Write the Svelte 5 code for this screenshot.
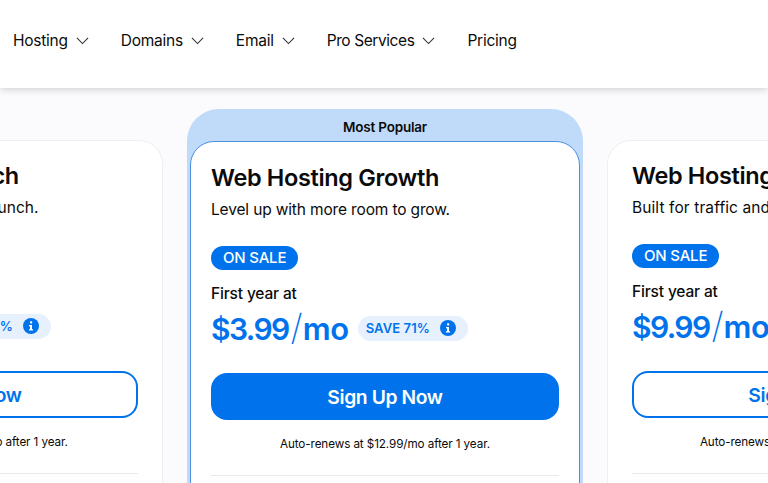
<script>
  const nav = [
    { label: 'Hosting', menu: true },
    { label: 'Domains', menu: true },
    { label: 'Email', menu: true },
    { label: 'Pro Services', menu: true },
    { label: 'Pricing', menu: false }
  ];
</script>

{#snippet info()}
  <svg class="info" viewBox="0 0 16 16" aria-hidden="true">
    <circle cx="8" cy="8" r="8" fill="#0073ec" />
    <rect x="7" y="3.2" width="2.2" height="2.2" rx="0.6" fill="#fff" />
    <path d="M6 7h3v4.2h1.1v1.3H5.9v-1.3H7V8.3H6z" fill="#fff" />
  </svg>
{/snippet}

{#snippet plan(title, sub, price, save, renew, solid)}
  <h2>{title}</h2>
  <p class="sub">{sub}</p>
  <span class="sale">ON SALE</span>
  <p class="first">First year at</p>
  <div class="price-row">
    <span class="price">{price}<span class="slash">/</span><span class="unit">mo</span></span>
    {#if save}
      <span class="save">{save}{@render info()}</span>
    {/if}
  </div>
  <button class:solid>Sign Up Now</button>
  <p class="renew">{renew}</p>
  <hr />
{/snippet}

<header>
  <nav>
    {#each nav as item}
      <span class="nav-item">
        {item.label}
        {#if item.menu}
          <svg class="chev" viewBox="0 0 14 8" aria-hidden="true">
            <path d="M1 1l6 6 6-6" fill="none" stroke="#333" stroke-width="1.2" />
          </svg>
        {/if}
      </span>
    {/each}
  </nav>
</header>

<main>
  <article class="card side">
    {@render plan('Web Hosting Launch', "Everything you'll need for launch.", '$4.99', 'SAVE 56%', 'Auto-renews at $11.99/mo after 1 year.', false)}
  </article>

  <section class="featured">
    <div class="ribbon">Most Popular</div>
    <article class="card inner">
      {@render plan('Web Hosting Growth', 'Level up with more room to grow.', '$3.99', 'SAVE 71%', 'Auto-renews at $12.99/mo after 1 year.', true)}
    </article>
  </section>

  <article class="card side">
    {@render plan('Web Hosting Scale', 'Built for traffic and growth at scale.', '$9.99', 'SAVE 60%', 'Auto-renews at $24.99/mo after 1 year.', false)}
  </article>
</main>

<style>
  :global(body) {
    margin: 0;
    background: #fbfbfd;
    overflow: hidden;
    height: 483px;
    font-family: 'Inter', 'Liberation Sans', sans-serif;
    color: #0b0b0b;
  }
  header {
    height: 88px;
    background: #fff;
    box-shadow: 0 1px 8px rgba(0, 0, 0, 0.2);
    position: relative;
    display: flex;
    align-items: center;
    padding-left: 13px;
    padding-bottom: 8px;
    box-sizing: border-box;
  }
  nav {
    display: flex;
    gap: 32px;
  }
  .nav-item {
    display: flex;
    align-items: center;
    gap: 8px;
    font-size: 15.5px;
    font-weight: 400;
    letter-spacing: -0.25px;
    white-space: nowrap;
  }
  .nav-item:nth-child(4) {
    letter-spacing: -0.42px;
  }
  .chev {
    width: 13px;
    height: 7.5px;
    margin-top: 2px;
  }
  main {
    display: flex;
    gap: 24px;
    margin-left: -235px;
    padding-top: 21px;
    width: 1300px;
    align-items: flex-start;
  }
  .card {
    background: #fff;
    box-sizing: border-box;
    flex: none;
  }
  .side {
    width: 398px;
    height: 400px;
    margin-top: 31px;
    border: 1px solid #efeff2;
    border-radius: 24px;
    padding: 23px 24px 0;
  }
  .featured {
    flex: none;
    width: 396px;
    height: 400px;
    background: #bfdbf9;
    border-radius: 32px 32px 0 0;
    padding: 0 3px;
    box-sizing: border-box;
  }
  .ribbon {
    height: 32px;
    display: flex;
    align-items: center;
    justify-content: center;
    font-size: 13.5px;
    font-weight: 600;
    letter-spacing: -0.2px;
    box-sizing: border-box;
    padding-top: 3px;
  }
  .inner {
    height: 368px;
    border: 1px solid #4a90df;
    border-radius: 24px;
    padding: 24px 20px 0;
  }
  h2 {
    margin: 0;
    font-size: 23.5px;
    line-height: 24px;
    font-weight: 600;
    letter-spacing: -0.35px;
    white-space: nowrap;
  }
  .sub {
    margin: 10px 0 0;
    font-size: 15.5px;
    line-height: 20px;
    letter-spacing: -0.15px;
    white-space: nowrap;
  }
  .side .sub {
    letter-spacing: 0.1px;
  }
  .sale {
    display: inline-block;
    margin-top: 26px;
    height: 24px;
    line-height: 24px;
    padding: 0 12px;
    border-radius: 12px;
    background: #0073ec;
    color: #fff;
    font-size: 15px;
    font-weight: 500;
    letter-spacing: -0.2px;
    vertical-align: top;
  }
  .first {
    margin: 14px 0 0;
    font-size: 15.5px;
    line-height: 20px;
    font-weight: 500;
    letter-spacing: -0.15px;
  }
  .price-row {
    margin-top: 6px;
    display: flex;
    align-items: center;
    gap: 9px;
    height: 36px;
    white-space: nowrap;
  }
  .price {
    color: #0073ec;
    font-size: 30px;
    font-weight: 600;
    letter-spacing: -1.6px;
  }
  .slash {
    font-size: 36px;
    font-weight: 200;
    line-height: 30px;
    margin: 0 0 0 2px;
    letter-spacing: 0;
  }
  .unit {
    font-size: 31px;
    letter-spacing: -0.4px;
  }
  .save {
    display: inline-flex;
    align-items: center;
    gap: 10px;
    height: 25px;
    padding: 0 12px 0 8px;
    border-radius: 13px;
    background: #e6f1fd;
    color: #0073ec;
    font-size: 13px;
    font-weight: 600;
    letter-spacing: 0.1px;
  }
  .info {
    width: 16px;
    height: 16px;
  }
  button {
    display: block;
    width: 100%;
    height: 47px;
    margin-top: 27px;
    border: 2px solid #0073ec;
    border-radius: 16px;
    background: #fff;
    color: #0073ec;
    font: 600 19.3px 'Inter', 'Liberation Sans', sans-serif;
    letter-spacing: -0.4px;
  }
  button.solid {
    background: #0073ec;
    color: #fff;
  }
  .renew {
    margin: 16px 0 0;
    font-size: 11.7px;
    line-height: 16px;
    text-align: center;
    letter-spacing: -0.1px;
    white-space: nowrap;
  }
  hr {
    margin: 23px 0 0;
    border: 0;
    border-top: 1px solid #e8e9ec;
  }
</style>
